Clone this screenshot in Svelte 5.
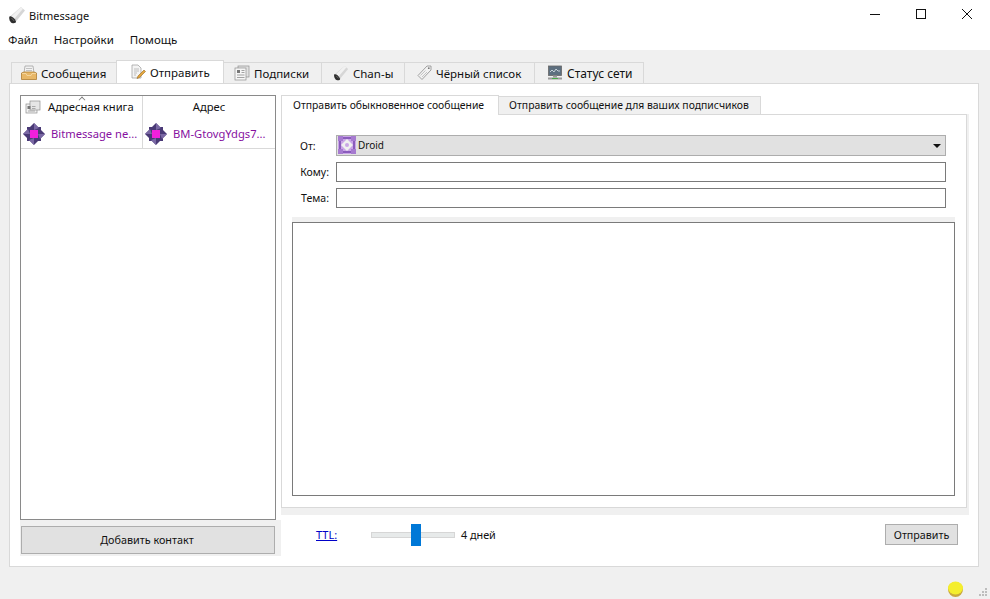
<script>
  const tabs = [
    { label: 'Сообщения', icon: 'inbox' },
    { label: 'Отправить', icon: 'send', active: true },
    { label: 'Подписки', icon: 'subs' },
    { label: 'Chan-ы', icon: 'logo' },
    { label: 'Чёрный список', icon: 'tag' },
    { label: 'Статус сети', icon: 'net' }
  ];
</script>

{#snippet identicon()}
  <svg class="ident" width="22" height="22" viewBox="0 0 22 22">
    <path d="M11 0L22 11L11 22L0 11z" fill="#4a3a76" />
    <path d="M4 4h4.500L4 8.500zM18 4v4.500L13.500 4zM18 18h-4.500L18 13.500zM4 18v-4.500L8.500 18z" fill="#4a3a76" />
    <path d="M11 0l5 5-5 2zM22 11l-5 5-2-5zM11 22l-5-5 5-2zM0 11l5-5 2 5z" fill="#7a68a4" />
    <rect x="7" y="7" width="8" height="8" fill="#f21fdc" />
  </svg>
{/snippet}

{#snippet logo(size)}
  <svg width={size} height={size} viewBox="0 0 18 18">
    <path d="M13 1l4 3.500-9 11-6-5z" fill="#d6d6d6" />
    <path d="M13 1l2 1.800-9 10.500-3-2.500z" fill="#f1f1f1" />
    <path d="M1.500 10.500c2-.8 5 1.500 6.500 5 .2 1.500-2 2-4 1.500S.5 12 1.500 10.500z" fill="#2e2e2e" />
    <path d="M3.500 12.500c1 .3 2 1.200 2.500 2.500" fill="none" stroke="#777" stroke-width=".8" />
  </svg>
{/snippet}

{#snippet tabIcon(name)}
  {#if name === 'inbox'}
    <svg width="16" height="16" viewBox="0 0 16 16">
      <path d="M4 1h8l1 7H3z" fill="#f2f2f2" stroke="#9a9a9a" stroke-width=".7" />
      <path d="M5 3.500h6M5 5.500h6" stroke="#b5b5b5" stroke-width=".8" />
      <path d="M.5 8l2.500-1h10l2.500 1v6.500H.5z" fill="#e8b767" stroke="#b07d31" stroke-width=".8" />
      <path d="M1 8.500h4l1 2h4l1-2h4" fill="none" stroke="#f6dca8" stroke-width=".8" />
    </svg>
  {:else if name === 'send'}
    <svg width="16" height="16" viewBox="0 0 16 16">
      <path d="M2 1h6l3 3v10H2z" fill="#f4f4f4" stroke="#9a9a9a" stroke-width=".7" />
      <path d="M4 5h5M4 7h5M4 9h3M4 11h2" stroke="#b0b0b0" stroke-width=".8" />
      <path d="M14 6l1.500 1.500-6 6-2.500 1 1-2.500z" fill="#e2a63f" stroke="#9a6a1e" stroke-width=".6" />
    </svg>
  {:else if name === 'subs'}
    <svg width="16" height="16" viewBox="0 0 16 16">
      <rect x="4" y="1" width="11" height="11" fill="#e2e2e2" stroke="#8f8f8f" stroke-width=".7" />
      <rect x="1" y="3" width="11" height="12" fill="#f6f6f6" stroke="#8f8f8f" stroke-width=".7" />
      <rect x="3" y="5" width="3" height="3" fill="#777" />
      <path d="M7.500 5.500h3M7.500 7.500h3M3 10h7.500M3 12.500h7.500" stroke="#999" stroke-width=".9" />
    </svg>
  {:else if name === 'logo'}
    {@render logo(16)}
  {:else if name === 'tag'}
    <svg width="16" height="16" viewBox="0 0 16 16">
      <path d="M11 1l4 0 0 4-9 9.500-4-4z" fill="#f2f2f2" stroke="#8d8d8d" stroke-width=".8" />
      <circle cx="12.800" cy="3.200" r=".9" fill="#777" />
      <path d="M4.500 10.500l5-5M6 12l5-5" stroke="#b9b9b9" stroke-width=".8" />
    </svg>
  {:else}
    <svg width="16" height="16" viewBox="0 0 16 16">
      <rect x="1.500" y="1" width="13" height="9.500" fill="#5d6f7f" stroke="#666" stroke-width=".8" />
      <path d="M3 7l2-2 2 2 2-3 2 2 2 0" fill="none" stroke="#dfe9ee" stroke-width=".8" />
      <rect x="6" y="10.500" width="4" height="2" fill="#999" />
      <rect x="1" y="12.500" width="14" height="2" fill="#9a9a9a" />
      <rect x="5" y="13" width="6" height="1" fill="#4aa84a" />
    </svg>
  {/if}
{/snippet}

<div class="window">
  <header class="titlebar">
    <span class="app-icon">{@render logo(18)}</span>
    <span class="title">Bitmessage</span>
    <div class="controls">
      <svg width="46" height="30" viewBox="0 0 46 30"><path d="M18 14.500h10" stroke="#111" /></svg>
      <svg width="46" height="30" viewBox="0 0 46 30"><rect x="18.500" y="9.500" width="9" height="9" fill="none" stroke="#111" /></svg>
      <svg width="46" height="30" viewBox="0 0 46 30"><path d="M18 9l10 10M28 9L18 19" stroke="#111" /></svg>
    </div>
  </header>

  <nav class="menubar">
    <span>Файл</span>
    <span>Настройки</span>
    <span>Помощь</span>
  </nav>

  <main class="content">
    <div class="tabs">
      {#each tabs as tab}
        <div class="tab" class:active={tab.active}>
          {@render tabIcon(tab.icon)}
          <span>{tab.label}</span>
        </div>
      {/each}
    </div>

    <section class="panel">
      <div class="left">
        <div class="book">
          <div class="book-row book-head">
            <span class="sort"></span>
            <div class="cell first">
              <svg width="16" height="16" viewBox="0 0 16 16">
                <rect x="1" y="5" width="11" height="9" fill="#f2f2f2" stroke="#8f8f8f" stroke-width=".7" />
                <rect x="5" y="2" width="10" height="9" fill="#e6e6e6" stroke="#8f8f8f" stroke-width=".7" />
                <rect x="2.500" y="7" width="3" height="3" fill="#777" />
                <path d="M7 7.500h3.500M7 9.500h3.500M3 12h7" stroke="#999" stroke-width=".8" />
              </svg>
              <span class="head-label">Адресная книга</span>
            </div>
            <div class="cell center">Адрес</div>
          </div>
          <div class="book-row entry">
            <div class="cell first">{@render identicon()}<span>Bitmessage ne...</span></div>
            <div class="cell">{@render identicon()}<span>BM-GtovgYdgs7...</span></div>
          </div>
        </div>
        <div class="add-wrap">
          <button class="add">Добавить контакт</button>
        </div>
      </div>

      <div class="right">
        <div class="subtabs">
          <div class="subtab active">Отправить обыкновенное сообщение</div>
          <div class="subtab">Отправить сообщение для ваших подписчиков</div>
        </div>

        <div class="pane">
          <div class="form">
            <label>От:</label>
            <div class="select">
              <svg width="18" height="18" viewBox="0 0 18 18">
                <rect width="18" height="18" fill="#c9a4e6" />
                <path d="M0 0h5v5H0zM13 0h5v5h-5zM0 13h5v5H0zM13 13h5v5h-5z" fill="#a67ad0" />
                <path d="M5 1h8v2H5zM5 15h8v2H5zM1 5h2v8H1zM15 5h2v8h-2z" fill="#8a5cbc" />
                <path d="M9 3l6 6-6 6-6-6z" fill="#efefef" />
                <circle cx="9" cy="9" r="2" fill="#c9a4e6" />
              </svg>
              <span>Droid</span>
              <i class="arrow"></i>
            </div>
            <label>Кому:</label>
            <div class="input"></div>
            <label>Тема:</label>
            <div class="input"></div>
          </div>
          <div class="message"></div>
        </div>

        <div class="bottom">
          <a class="ttl" href="#ttl">TTL:</a>
          <div class="slider"><span class="thumb"></span></div>
          <span class="days">4 дней</span>
          <button class="send">Отправить</button>
        </div>
      </div>
    </section>
  </main>

  <footer class="status">
    <svg width="17" height="16" viewBox="0 0 17 16">
      <circle cx="8.500" cy="8.500" r="7.500" fill="#c9a93e" />
      <ellipse cx="8.500" cy="7" rx="7.500" ry="6.500" fill="#f4ee2e" />
    </svg>
    <svg class="grip" width="10" height="10" viewBox="0 0 10 10">
      <path d="M7 1h2v2H7zM4 4h2v2H4zM7 4h2v2H7zM1 7h2v2H1zM4 7h2v2H4zM7 7h2v2H7z" fill="#bdbdbd" />
    </svg>
  </footer>
</div>

<style>
  :global(body) {
    margin: 0;
    background: #f0f0f0;
  }

  .window {
    width: 990px;
    height: 599px;
    display: flex;
    flex-direction: column;
    background: #f0f0f0;
    font-family: "Noto Sans", "Open Sans", sans-serif;
    font-size: 11.2px;
    color: #111;
    overflow: hidden;
  }

  .titlebar {
    height: 30px;
    background: #fff;
    display: flex;
    align-items: center;
    padding-left: 8px;
    flex: none;
  }

  .app-icon {
    display: flex;
    width: 21px;
  }

  .title {
    font-size: 11px;
  }

  .controls {
    margin-left: auto;
    display: flex;
  }

  .menubar {
    height: 20px;
    padding-bottom: 2px;
    box-sizing: border-box;
    background: #fff;
    display: flex;
    align-items: center;
    gap: 16px;
    padding-left: 8px;
    font-size: 11.5px;
    flex: none;
  }

  .content {
    padding: 12px 11px 0 9px;
    flex: none;
  }

  .tabs {
    display: flex;
    padding-left: 2px;
    height: 21px;
    position: relative;
    z-index: 1;
  }

  .tab {
    display: flex;
    align-items: center;
    gap: 4px;
    padding-left: 9px;
    background: #f0f0f0;
    border: 1px solid #d9d9d9;
    border-bottom: none;
    border-left: none;
    font-size: 11.5px;
    box-sizing: border-box;
    white-space: nowrap;
  }

  .tab:nth-child(1) { width: 106px; border-left: 1px solid #d9d9d9; }
  .tab:nth-child(3) { width: 98px; padding-left: 10px; }
  .tab:nth-child(4) { width: 83px; padding-left: 11px; }
  .tab:nth-child(5) { width: 130px; padding-left: 11px; }
  .tab:nth-child(6) { width: 109px; padding-left: 12px; font-size: 12px; }

  .tab.active {
    width: 108px;
    background: #fff;
    height: 23px;
    margin-top: -2px;
    padding-left: 13px;
    gap: 4px;
    border-left: 1px solid #d9d9d9;
    margin-left: -1px;
  }

  .panel {
    height: 484px;
    box-sizing: border-box;
    background: #fff;
    border: 1px solid #d9d9d9;
    padding: 11px 0 0 10px;
    display: flex;
  }

  .left {
    width: 261px;
    flex: none;
  }

  .book {
    width: 256px;
    height: 425px;
    box-sizing: border-box;
    border: 1px solid #8a8a8a;
    background: #fff;
  }

  .book-row {
    display: grid;
    grid-template-columns: 122px 1fr;
    position: relative;
  }

  .book-head {
    height: 26px;
    padding-bottom: 5px;
    box-sizing: border-box;
  }

  .sort {
    position: absolute;
    left: 58px;
    top: 0;
    width: 5px;
    height: 5px;
    border-left: 1px solid #777;
    border-top: 1px solid #777;
    transform: translateY(1px) rotate(45deg) scale(.8);
  }

  .cell {
    display: flex;
    align-items: center;
    min-width: 0;
    white-space: nowrap;
  }

  .cell.first {
    border-right: 1px solid #d9d9d9;
    box-sizing: border-box;
    margin-bottom: -5px;
    padding-bottom: 5px;
  }

  .entry .cell.first {
    margin-bottom: 0;
  }

  .cell.center {
    justify-content: center;
  }

  .book-head svg {
    margin-left: 4px;
  }

  .head-label {
    margin-left: 7px;
  }

  .entry {
    height: 27px;
    border-bottom: 1px solid #d9d9d9;
    box-sizing: border-box;
    color: #86109f;
  }

  .entry .cell {
    gap: 6px;
    padding-left: 2px;
    padding-bottom: 3px;
  }

  .ident {
    flex: none;
  }

  .add-wrap {
    width: 261px;
    height: 36px;
    box-sizing: border-box;
    padding: 6px 0 0 1px;
    background: #f0f0f0;
  }

  .add {
    display: block;
    width: 254px;
    height: 28px;
    background: #e1e1e1;
    border: 1px solid #adadad;
    font: inherit;
    font-size: 10.8px;
    color: inherit;
    padding: 0 2px 2px 0;
  }

  .right {
    width: 687px;
    flex: none;
  }

  .subtabs {
    display: flex;
    height: 19px;
    position: relative;
    z-index: 1;
    align-items: flex-end;
  }

  .subtab {
    height: 18px;
    line-height: 16px;
    padding: 0 11px 0 10px;
    background: #f0f0f0;
    border: 1px solid #d9d9d9;
    border-bottom: none;
    border-left: none;
    box-sizing: border-box;
    font-size: 10.4px;
  }

  .subtab.active {
    height: 20px;
    line-height: 19px;
    padding: 0 14px 0 11px;
    background: #fff;
    border-left: 1px solid #d9d9d9;
    margin-bottom: -1px;
  }

  .pane {
    width: 686px;
    height: 394px;
    box-sizing: border-box;
    background: #fff;
    border: 1px solid #d9d9d9;
    padding: 20px 11px 0 10px;
    box-shadow: 2px 0 0 #f0f0f0, 2px 7px 0 #f0f0f0, 0 7px 0 #f0f0f0;
  }

  .form {
    display: grid;
    grid-template-columns: 44px 610px;
    row-gap: 6px;
    align-items: center;
    padding-bottom: 14px;
  }

  .form label {
    text-align: right;
    padding-right: 7px;
    font-size: 10.5px;
  }

  .form label:first-child {
    text-align: left;
    padding-left: 8px;
    padding-right: 0;
  }

  .select {
    height: 21px;
    box-sizing: border-box;
    background: #e1e1e1;
    border: 1px solid #adadad;
    display: flex;
    align-items: center;
    gap: 2px;
    padding: 0 0 1px 1px;
    position: relative;
    font-size: 10px;
  }

  .arrow {
    position: absolute;
    right: 4px;
    top: 8px;
    border: 4px solid transparent;
    border-top: 4px solid #111;
    border-bottom: none;
  }

  .input {
    height: 20px;
    box-sizing: border-box;
    background: #fff;
    border: 1px solid #7a7a7a;
  }

  .message {
    height: 274px;
    box-sizing: border-box;
    border: 1px solid #7a7a7a;
    background: #fff;
    box-shadow: 0 -5px 0 #f0f0f0;
  }

  .bottom {
    margin-top: 7px;
    height: 41px;
    padding-bottom: 2px;
    box-sizing: border-box;
    display: flex;
    align-items: center;
    padding-left: 35px;
    position: relative;
  }

  .ttl {
    color: #0000c8;
    font-size: 11px;
    width: 55px;
  }

  .slider {
    width: 82px;
    height: 4px;
    background: #e7eaea;
    border: 1px solid #d6d6d6;
    position: relative;
    box-sizing: content-box;
  }

  .thumb {
    position: absolute;
    left: 39px;
    top: -9px;
    width: 10px;
    height: 22px;
    background: #0078d7;
  }

  .days {
    margin-left: 6px;
    font-size: 10.8px;
  }

  .send {
    margin-left: auto;
    margin-right: 10px;
    width: 73px;
    height: 21px;
    background: #e1e1e1;
    border: 1px solid #adadad;
    font: inherit;
    font-size: 10.7px;
    color: inherit;
    padding: 0;
  }

  .status {
    flex: 1;
    display: flex;
    justify-content: flex-end;
    align-items: flex-end;
    padding: 0 2px 2px 0;
    gap: 14px;
  }
</style>
